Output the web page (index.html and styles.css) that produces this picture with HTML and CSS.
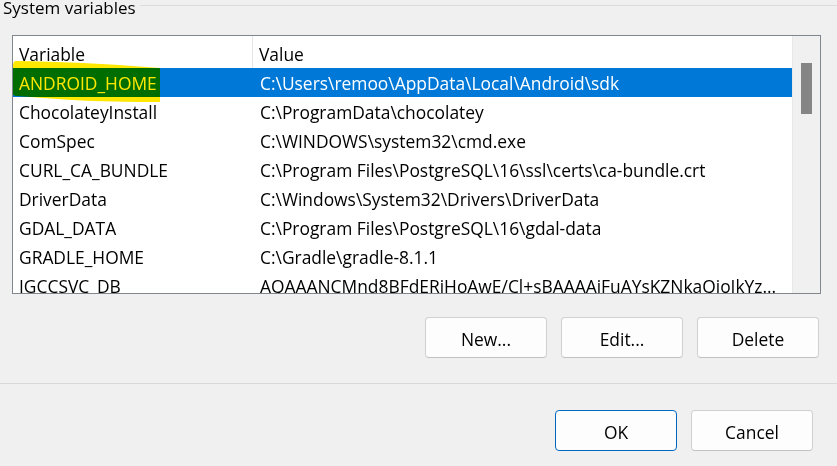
FILE: index.html
```html
<!DOCTYPE html>
<html lang="en">
<head>
    <meta charset="UTF-8">
    <title>Environment Variables</title>
    <link rel="stylesheet" href="styles.css">
</head>
<body>
    <div class="group-title">
        <span>System variables</span>
        <div class="group-line"></div>
    </div>

    <div class="list">
        <div class="list-table">
            <div class="list-head">
                <div class="col-var">Variable</div>
                <div class="col-val">Value</div>
            </div>
            <div class="list-rows">
                <div class="row selected">
                    <div class="col-var">ANDROID_HOME</div>
                    <div class="col-val">C:\Users\remoo\AppData\Local\Android\sdk</div>
                </div>
                <div class="row">
                    <div class="col-var">ChocolateyInstall</div>
                    <div class="col-val">C:\ProgramData\chocolatey</div>
                </div>
                <div class="row">
                    <div class="col-var">ComSpec</div>
                    <div class="col-val">C:\WINDOWS\system32\cmd.exe</div>
                </div>
                <div class="row">
                    <div class="col-var">CURL_CA_BUNDLE</div>
                    <div class="col-val">C:\Program Files\PostgreSQL\16\ssl\certs\ca-bundle.crt</div>
                </div>
                <div class="row">
                    <div class="col-var">DriverData</div>
                    <div class="col-val">C:\Windows\System32\Drivers\DriverData</div>
                </div>
                <div class="row">
                    <div class="col-var">GDAL_DATA</div>
                    <div class="col-val">C:\Program Files\PostgreSQL\16\gdal-data</div>
                </div>
                <div class="row">
                    <div class="col-var">GRADLE_HOME</div>
                    <div class="col-val">C:\Gradle\gradle-8.1.1</div>
                </div>
                <div class="row">
                    <div class="col-var">IGCCSVC_DB</div>
                    <div class="col-val">AQAAANCMnd8BFdERjHoAwE/Cl+sBAAAAiFuAYsKZNkaQioIkYz...</div>
                </div>
            </div>
        </div>
        <div class="scrollbar">
            <div class="thumb"></div>
        </div>

        <!-- marker stroke drawn over the first entry -->
        <svg class="marker" width="160" height="44" viewBox="0 0 160 44">
            <path d="M4 1 Q1 1 1 6 L1 34 Q1 36 6 36 Q30 38 60 40 Q100 42 148 42 L148 8 L120 6 Q70 2 4 1 Z" fill="#ffe800"/>
        </svg>
    </div>

    <div class="actions">
        <button class="btn">New...</button>
        <button class="btn">Edit...</button>
        <button class="btn">Delete</button>
    </div>

    <div class="separator"></div>

    <div class="footer">
        <button class="btn btn-default">OK</button>
        <button class="btn">Cancel</button>
    </div>
</body>
</html>
```

FILE: styles.css
```css
body {
    margin: 0;
    background: #f0f0f0;
    font-family: 'Open Sans', 'Noto Sans', sans-serif;
    font-size: 17.4px;
    color: #000;
    overflow: hidden;
}

.group-title {
    display: flex;
    align-items: flex-start;
    height: 35px;
    padding-left: 3px;
}

.group-title span {
    font-size: 17px;
    line-height: 20px;
    margin-top: -2px;
}

.group-line {
    flex: 1;
    margin-top: 5px;
    margin-left: 4px;
    border-top: 1px solid #dcdcdc;
}

.list {
    position: relative;
    display: flex;
    margin-left: 12px;
    width: 807px;
    height: 257px;
    border: 1px solid #82878f;
    background: #fff;
}

.list-table {
    width: 780px;
    overflow: hidden;
}

.list-head {
    display: flex;
    height: 32px;
    align-items: stretch;
}

.list-head .col-var {
    border-right: 1px solid #e5e5e5;
    width: 233px;
}

.list-head .col-var,
.list-head .col-val {
    display: flex;
    align-items: center;
    padding-top: 3px;
}

.list-head .col-val {
    padding-left: 6px;
}

.row {
    display: flex;
    height: 29px;
    align-items: center;
    white-space: nowrap;
}

.col-var {
    width: 234px;
    padding-left: 6px;
}

.col-val {
    padding-left: 7px;
}

.row.selected {
    background: #0078d7;
    color: #fff;
}

.scrollbar {
    width: 27px;
    background: #f0f0f0;
    border-left: 1px solid #e8e8e8;
    display: flex;
    justify-content: center;
}

.thumb {
    width: 11px;
    height: 51px;
    margin-top: 27px;
    background: #858585;
}

.marker {
    position: absolute;
    left: -1px;
    top: 24px;
    mix-blend-mode: multiply;
}

.actions,
.footer {
    display: flex;
    justify-content: flex-end;
    gap: 14px;
}

.actions {
    margin-top: 23px;
    padding-right: 18px;
}

.separator {
    margin-top: 25px;
    border-top: 1px solid #d9d9d9;
}

.footer {
    margin-top: 26px;
    padding-right: 24px;
}

.btn {
    width: 122px;
    height: 41px;
    padding-top: 3px;
    font-family: inherit;
    font-size: 17.4px;
    color: #000;
    background: #fdfdfd;
    border: 1px solid #d0d0d0;
    border-bottom-color: #c2c2c2;
    border-radius: 4px;
}

.btn-default {
    border-color: #0067c0;
}
```
